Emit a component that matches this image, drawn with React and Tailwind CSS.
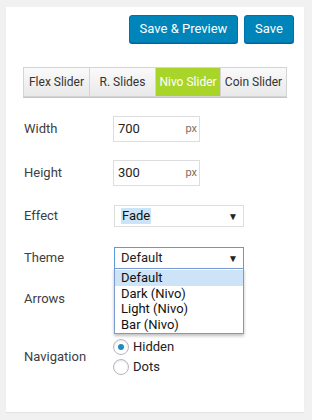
import { useState } from 'react'

const font = { fontFamily: 'Roboto, "Noto Sans", sans-serif' }

const tabs = [
  { label: 'Flex Slider', w: 'w-[66px]' },
  { label: 'R. Slides', w: 'w-[66px]' },
  { label: 'Nivo Slider', w: 'w-[65px]' },
  { label: 'Coin Slider', w: 'w-[67px]' },
]

const themes = ['Default', 'Dark (Nivo)', 'Light (Nivo)', 'Bar (Nivo)']

export default function App() {
  const [tab, setTab] = useState('Nivo Slider')
  const [nav, setNav] = useState('Hidden')

  return (
    <div className="min-h-[420px] bg-[#f1f1f1] pt-[7px] pl-[6px]" style={font}>
      <div className="w-[298px] h-[405px] bg-white shadow-[0_1px_1px_rgba(0,0,0,0.06)] pt-[8px] px-[17px] text-[#32373c]">
        {/* Header */}
        <div className="flex justify-end gap-[6px] mr-[-7px]">
          <button className="w-[109px] h-[28px] bg-[#0085ba] border border-[#0073aa] rounded-[3px] text-white text-[13px] shadow-[0_1px_0_#006799]">
            Save &amp; Preview
          </button>
          <button className="w-[50px] h-[28px] bg-[#0085ba] border border-[#0073aa] rounded-[3px] text-white text-[13px] shadow-[0_1px_0_#006799]">
            Save
          </button>
        </div>

        {/* Tabs */}
        <div className="flex mt-[24px]">
          {tabs.map((t) => (
            <button
              key={t.label}
              onClick={() => setTab(t.label)}
              className={`${t.w} h-[30px] text-[12px] border-y border-l last:border-r border-[#d4d4d4] ${
                tab === t.label
                  ? 'bg-[#a9d42a] text-white border-[#a9d42a]'
                  : 'bg-gradient-to-b from-[#fafafa] to-[#e9e9e9] text-[#333]'
              } shadow-[0_1px_0_#c4c4c4]`}
            >
              {t.label}
            </button>
          ))}
        </div>

        {/* Form */}
        <div className="pl-px text-[13px] text-[#3c4043]">
          <div className="flex items-center mt-[19px]">
            <div className="w-[89px]">Width</div>
            <div className="w-[87px] h-[26px] border border-[#dddddd] flex items-center justify-between pl-[4px] pr-[2px]">
              <span className="text-[#222]">700</span>
              <span className="text-[11px] text-[#7d6d5d]">px</span>
            </div>
          </div>

          <div className="flex items-center mt-[18px]">
            <div className="w-[89px]">Height</div>
            <div className="w-[87px] h-[26px] border border-[#dddddd] flex items-center justify-between pl-[4px] pr-[2px]">
              <span className="text-[#222]">300</span>
              <span className="text-[11px] text-[#7d6d5d]">px</span>
            </div>
          </div>

          <div className="flex items-center mt-[19px]">
            <div className="w-[90px]">Effect</div>
            <div className="w-[130px] h-[22px] border border-[#dddddd] flex items-center justify-between pl-[6px] pr-[5px]">
              <span className="bg-[#cce4f7] text-[#111] px-px leading-[16px]">Fade</span>
              <span className="text-[10px] text-[#222]">▼</span>
            </div>
          </div>

          <div className="relative">
            <div className="flex items-center mt-[20px]">
              <div className="w-[90px]">Theme</div>
              <div className="w-[130px] h-[22px] border border-[#5b9dd9] flex items-center justify-between pl-[6px] pr-[5px] text-[#222]">
                <span>Default</span>
                <span className="text-[10px]">▼</span>
              </div>
            </div>

            {/* Open dropdown list */}
            <div className="absolute left-[90px] top-[21px] w-[130px] border border-[#7a9bd0] bg-white shadow-[0_2px_3px_rgba(0,0,0,0.25)] z-10 py-px">
              {themes.map((th, i) => (
                <div
                  key={th}
                  className={`h-[15.5px] leading-[15px] pl-[6px] text-[#111] ${i === 0 ? 'bg-[#cde3f7]' : ''}`}
                >
                  {th}
                </div>
              ))}
            </div>

            <div className="flex items-center mt-[19px]">
              <div className="w-[90px]">Arrows</div>
              <div className="w-[130px] h-[22px] border border-[#dddddd]" />
            </div>
          </div>

          <div className="flex items-center mt-[29px]">
            <div className="w-[89px]">Navigation</div>
            <div className="flex flex-col gap-[4px]">
              {['Hidden', 'Dots'].map((o) => (
                <label key={o} className="flex items-center gap-[4px] leading-[16px] text-[#222] cursor-pointer" onClick={() => setNav(o)}>
                  <span className="w-[16px] h-[16px] rounded-full border border-[#b4b9be] flex items-center justify-center shadow-[inset_0_1px_2px_rgba(0,0,0,0.1)]">
                    {nav === o && <span className="w-[6px] h-[6px] rounded-full bg-[#1e8cbe]" />}
                  </span>
                  {o}
                </label>
              ))}
            </div>
          </div>
        </div>
      </div>
    </div>
  )
}
